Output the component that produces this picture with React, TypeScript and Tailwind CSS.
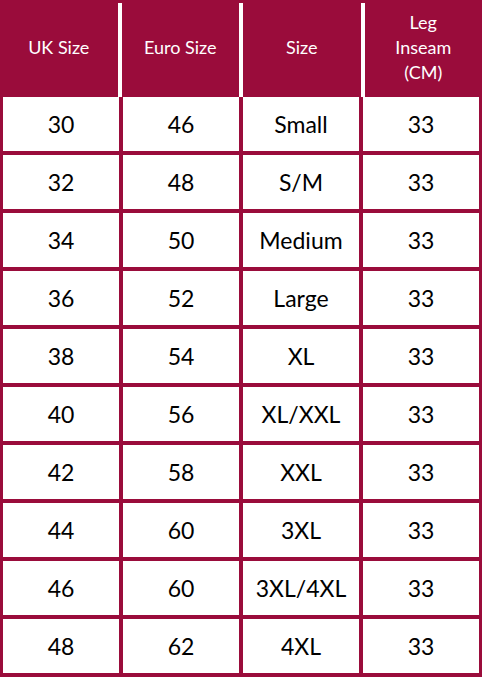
const rows: [string, string, string, string][] = [
  ["30", "46", "Small", "33"],
  ["32", "48", "S/M", "33"],
  ["34", "50", "Medium", "33"],
  ["36", "52", "Large", "33"],
  ["38", "54", "XL", "33"],
  ["40", "56", "XL/XXL", "33"],
  ["42", "58", "XXL", "33"],
  ["44", "60", "3XL", "33"],
  ["46", "60", "3XL/4XL", "33"],
  ["48", "62", "4XL", "33"],
];

export default function App() {
  return (
    <div
      className="w-[482px] h-[677px] bg-[#9a0c3b] overflow-hidden"
      style={{ fontFamily: "Lato, 'Open Sans', sans-serif" }}
    >
      {/* header */}
      <div className="flex h-[97px] pt-[3px] text-white text-[18px] leading-[25px]">
        <div className="flex-1 flex items-center justify-center pb-[6px]">UK Size</div>
        <div className="flex-1 flex items-center justify-center pb-[6px] border-l-[4px] border-white">Euro Size</div>
        <div className="flex-1 flex items-center justify-center pb-[6px] border-l-[4px] border-white">Size</div>
        <div className="flex-1 flex items-center justify-center pb-[6px] border-l-[4px] border-white text-center">
          Leg
          <br />
          Inseam
          <br />
          (CM)
        </div>
      </div>

      {/* body */}
      <div className="grid grid-cols-4 gap-[4px] px-[3px]">
        {rows.map((r, i) =>
          r.map((v, j) => (
            <div
              key={`${i}-${j}`}
              className="h-[54px] bg-white flex items-center justify-center text-[23px] leading-none text-black"
            >
              {v}
            </div>
          ))
        )}
      </div>
    </div>
  );
}
